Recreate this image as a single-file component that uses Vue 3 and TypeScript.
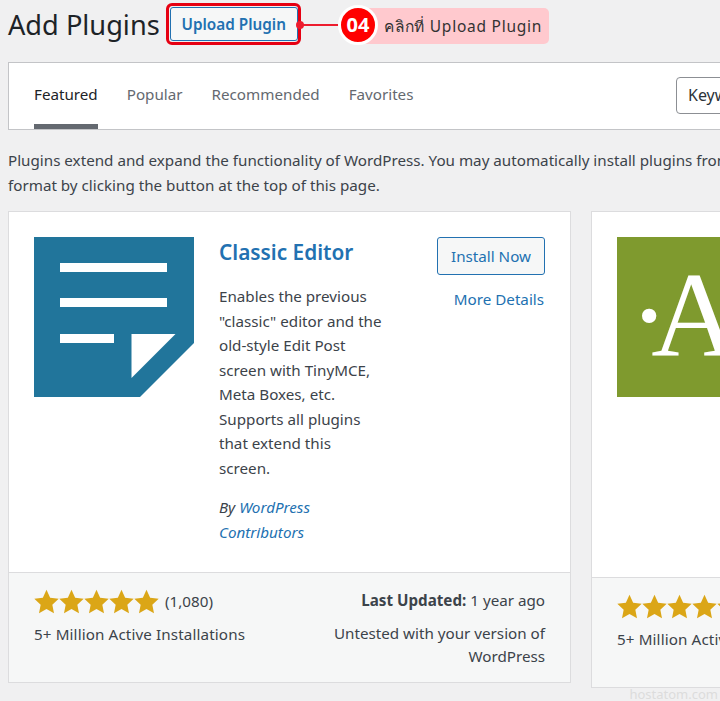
<template>
  <div class="page">
    <header class="head">
      <h1>Add Plugins</h1>
      <a class="upload">Upload Plugin</a>
    </header>

    <nav class="filters">
      <ul class="tabs">
        <li v-for="t in tabs" :key="t" :class="{ on: t === 'Featured' }">{{ t }}</li>
      </ul>
      <div class="search">Keyword</div>
    </nav>

    <p class="intro">
      Plugins extend and expand the functionality of WordPress. You may automatically install plugins from the WordPress Plugin Directory or upload a plugin in .zip<br />
      format by clicking the button at the top of this page.
    </p>

    <div class="cards">
      <section class="card first">
        <div class="top">
          <svg class="thumb" viewBox="0 0 160 160">
            <path fill="#21759b" d="M0 0h160v106l-54 54H0z" />
            <path fill="#fff" d="M26 26h107v9H26zM26 61h107v9H26zM26 97h54v9H26zM97.500 97h44l-44 44z" />
          </svg>
          <div class="desc">
            <h2>Classic Editor</h2>
            <p>Enables the previous "classic" editor and the old-style Edit Post screen with TinyMCE, Meta Boxes, etc. Supports all plugins that extend this screen.</p>
            <p class="by"><i>By <a>WordPress Contributors</a></i></p>
          </div>
          <div class="actions">
            <a class="install">Install Now</a>
            <a class="more">More Details</a>
          </div>
        </div>
        <footer class="bottom">
          <div class="left">
            <div class="rating">
              <span class="stars">
                <svg v-for="n in 5" :key="n" viewBox="0 0 24 24"><path fill="#dba617" d="M12 .8l3.500 7.600 8.200 1-6.100 5.600 1.600 8.200-7.200-4.100-7.200 4.100 1.600-8.200L.3 9.400l8.200-1z" /></svg>
              </span>
              <span>(1,080)</span>
            </div>
            <div class="installs">5+ Million Active Installations</div>
          </div>
          <div class="right">
            <div class="updated"><b>Last Updated:</b> 1 year ago</div>
            <div class="compat">Untested with your version of WordPress</div>
          </div>
        </footer>
      </section>

      <section class="card second">
        <div class="top">
          <div class="thumb green"><span>·A</span></div>
        </div>
        <footer class="bottom">
          <div class="left wide">
            <div class="rating">
              <span class="stars">
                <svg v-for="n in 5" :key="n" viewBox="0 0 24 24"><path fill="#dba617" d="M12 .8l3.500 7.600 8.200 1-6.100 5.600 1.600 8.200-7.200-4.100-7.200 4.100 1.600-8.200L.3 9.400l8.200-1z" /></svg>
              </span>
            </div>
            <div class="installs">5+ Million Active Installations</div>
          </div>
        </footer>
      </section>
    </div>

    <!-- คำอธิบายทับบนภาพ -->
    <div class="mark"></div>
    <div class="line"></div>
    <div class="dot"></div>
    <div class="note">คลิกที่ Upload Plugin</div>
    <div class="step">04</div>
    <div class="water">hostatom.com</div>
  </div>
</template>

<script setup lang="ts">
const tabs: string[] = ['Featured', 'Popular', 'Recommended', 'Favorites']
</script>

<style>
html, body { margin: 0; background: #f0f0f1; overflow: hidden; }
</style>

<style scoped>
.page {
  position: relative;
  width: 720px;
  height: 701px;
  overflow: hidden;
  box-sizing: border-box;
  padding: 0 0 0 8px;
  background: #f0f0f1;
  color: #3c434a;
  font: 15.2px/24.5px "Noto Sans", "Open Sans", sans-serif;
}
.head {
  display: flex;
  align-items: center;
  height: 50px;
  gap: 10px;
}
h1 {
  margin: 0;
  font-size: 27.2px;
  font-weight: 400;
  color: #1d2327;
  white-space: nowrap;
}
.upload {
  box-sizing: border-box;
  width: 128px;
  height: 34px;
  margin-top: -2px;
  border: 1px solid #2271b1;
  border-radius: 3px;
  background: #f6f7f7;
  color: #2271b1;
  font-size: 15.300px;
  font-weight: 600;
  line-height: 32px;
  text-align: center;
}
.filters {
  display: flex;
  justify-content: space-between;
  align-items: center;
  box-sizing: border-box;
  width: 820px;
  height: 68px;
  margin-top: 12px;
  padding: 0 0 0 25px;
  border: 1px solid #c3c4c7;
  background: #fff;
}
.tabs {
  display: flex;
  gap: 29px;
  margin: 0;
  padding: 0;
  list-style: none;
  align-self: stretch;
}
.tabs li {
  box-sizing: border-box;
  height: 66px;
  padding-top: 19px;
  color: #646970;
}
.tabs li.on {
  color: #1d2327;
  border-bottom: 5px solid #646970;
}
.search {
  box-sizing: border-box;
  width: 127px;
  height: 37px;
  margin: -1px 24px 0 0;
  padding: 5px 11px;
  border: 1px solid #8c8f94;
  border-radius: 4px;
  color: #2c3338;
  font-size: 16px;
}
.intro {
  width: 900px;
  margin: 18px 0 14px;
  white-space: nowrap;
}
.cards {
  display: flex;
  align-items: flex-start;
  gap: 20px;
}
.card {
  flex: none;
  display: flex;
  flex-direction: column;
  box-sizing: border-box;
  border: 1px solid #dcdcde;
  background: #fff;
}
.first { width: 563px; height: 472px; }
.second { width: 563px; height: 477px; }
.top {
  flex: 1;
  display: flex;
  padding: 25px;
}
.thumb {
  flex: none;
  display: block;
  width: 160px;
  height: 160px;
}
.green {
  background: #7f9a2e;
  color: #fff;
  overflow: hidden;
  font: 121px/156px "Liberation Serif", serif;
  white-space: nowrap;
  text-indent: 12px;
  letter-spacing: -18px;
}
.desc {
  flex: none;
  width: 166px;
  margin-left: 25px;
}
h2 {
  margin: 0 0 17px;
  color: #2271b1;
  font-size: 20.800px;
  font-weight: 600;
  line-height: 30px;
}
.desc p { margin: 0; }
.desc .by { margin-top: 15px; }
.desc a, .more { color: #2271b1; }
.actions {
  flex: 1;
  display: flex;
  flex-direction: column;
  align-items: flex-end;
  gap: 12px;
}
.more { margin-right: 1px; }
.install {
  box-sizing: border-box;
  width: 108px;
  height: 38px;
  border: 1px solid #2271b1;
  border-radius: 3px;
  background: #f6f7f7;
  color: #2271b1;
  line-height: 36px;
  text-align: center;
}
.bottom {
  flex: none;
  display: flex;
  justify-content: space-between;
  box-sizing: border-box;
  height: 110px;
  padding: 16px 25px 0;
  border-top: 1px solid #dcdcde;
  background: #f6f7f7;
}
.rating {
  display: flex;
  align-items: center;
  gap: 6px;
  margin-bottom: 8px;
  height: 25px;
}
.stars { display: flex; }
.stars svg { display: block; width: 25px; height: 25px; }
.installs { letter-spacing: 0.12px; }
.wide { white-space: nowrap; }
.right {
  width: 225px;
  margin-top: -1px;
  text-align: right;
}
.updated { margin-bottom: 9px; }
.compat { line-height: 23px; }
.mark {
  position: absolute;
  left: 166px;
  top: 3px;
  width: 135px;
  height: 42px;
  box-sizing: border-box;
  border: 3px solid #e60012;
  border-radius: 6px;
}
.line {
  position: absolute;
  left: 301px;
  top: 24px;
  width: 40px;
  height: 2px;
  background: #ed1c2e;
}
.dot {
  position: absolute;
  left: 296px;
  top: 21px;
  width: 8px;
  height: 8px;
  border-radius: 50%;
  background: #ed1c2e;
}
.note {
  position: absolute;
  left: 360px;
  top: 8px;
  width: 189px;
  height: 36px;
  box-sizing: border-box;
  padding-left: 24px;
  border-radius: 5px;
  background: #ffc9ce;
  color: #333;
  font-size: 15.500px;
  letter-spacing: 0.75px;
  line-height: 36px;
  white-space: nowrap;
}
.step {
  position: absolute;
  left: 338px;
  top: 5px;
  width: 40px;
  height: 40px;
  box-sizing: border-box;
  border: 3px solid #fff;
  border-radius: 50%;
  background: #f00;
  color: #fff;
  font-size: 20px;
  font-weight: 700;
  line-height: 34px;
  text-align: center;
}
.water {
  position: absolute;
  right: 2px;
  top: 686px;
  color: #dcdcdc;
  font-size: 13px;
  line-height: 16px;
}
</style>
